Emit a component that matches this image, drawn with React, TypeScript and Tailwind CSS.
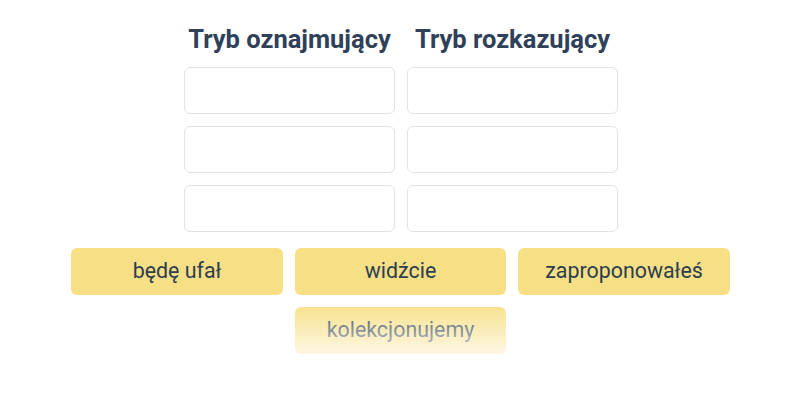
export default function App() {
  const slots = [0, 1, 2];
  const chips = ["będę ufał", "widźcie", "zaproponowałeś", "kolekcjonujemy"];

  return (
    <div className="w-[800px] h-[400px] bg-white font-['Roboto',sans-serif] text-[#2c3e50] relative overflow-hidden">
      <div className="flex justify-center gap-3 pt-[23px] pl-[2px]">
        {["Tryb oznajmujący", "Tryb rozkazujący"].map((title) => (
          <div key={title} className="w-[211px] flex flex-col gap-3">
            <h2 className="text-[25.5px] leading-[32px] font-bold text-center text-[#2f4159] whitespace-nowrap">{title}</h2>
            {slots.map((i) => (
              <div key={i} className="h-[47px] rounded-md border border-[#dfe3e6] bg-white" />
            ))}
          </div>
        ))}
      </div>

      <div className="flex flex-wrap justify-center gap-x-3 gap-y-3 w-[659px] ml-[71px] mt-[16px]">
        {chips.map((c) => (
          <div
            key={c}
            className="w-[211.5px] h-[47px] rounded-md bg-[#f7df85] flex items-center justify-center text-[21.4px] text-[#2c3e50]"
          >
            {c}
          </div>
        ))}
      </div>

      {/* bottom fade */}
      <div className="absolute left-0 right-0 top-[300px] h-[60px] bg-gradient-to-b from-white/0 to-white/85 pointer-events-none" />
      <div className="absolute left-0 right-0 top-[360px] bottom-0 bg-white/85 pointer-events-none" />
    </div>
  );
}
